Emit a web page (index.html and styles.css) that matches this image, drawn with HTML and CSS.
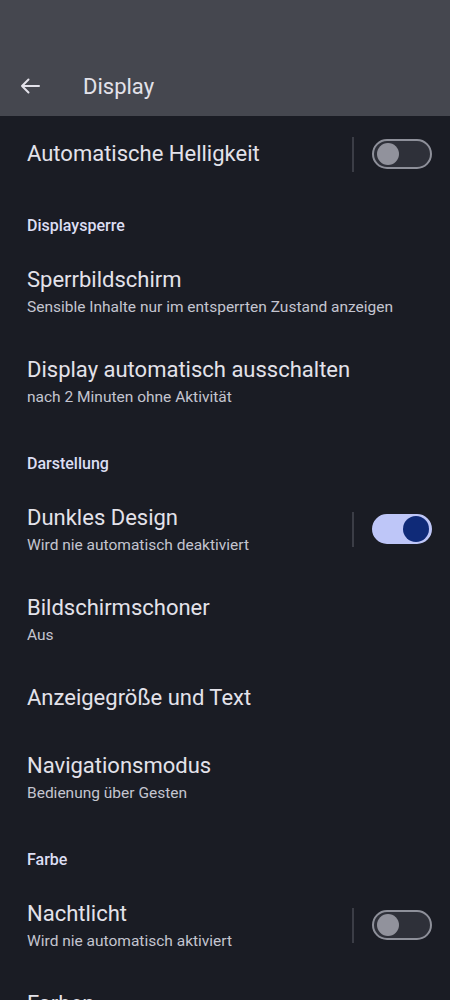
FILE: index.html
```html
<!DOCTYPE html>
<html lang="de">
  <head>
    <meta charset="UTF-8" />
    <meta name="viewport" content="width=device-width, initial-scale=1.0" />
    <title>Display</title>
    <link rel="stylesheet" href="styles.css">
  </head>
  <body>
    <header class="app-bar">
      <div class="app-bar-row">
        <svg class="back" viewBox="0 0 24 24" width="24" height="24">
          <path d="M3 12H20M9.5 5.5L3 12l6.5 6.5" fill="none" stroke="#e3e2ea" stroke-width="2" stroke-linecap="round" stroke-linejoin="round" />
        </svg>
        <h1>Display</h1>
      </div>
    </header>

    <main class="list">
      <div class="item">
        <div class="text">
          <div class="title">Automatische Helligkeit</div>
        </div>
        <div class="divider"></div>
        <div class="switch"><span class="thumb"></span></div>
      </div>

      <div class="section">Displaysperre</div>
      <div class="item two">
        <div class="text">
          <div class="title">Sperrbildschirm</div>
          <div class="summary">Sensible Inhalte nur im entsperrten Zustand anzeigen</div>
        </div>
      </div>
      <div class="item two">
        <div class="text">
          <div class="title">Display automatisch ausschalten</div>
          <div class="summary">nach 2 Minuten ohne Aktivität</div>
        </div>
      </div>

      <div class="section">Darstellung</div>
      <div class="item two">
        <div class="text">
          <div class="title">Dunkles Design</div>
          <div class="summary">Wird nie automatisch deaktiviert</div>
        </div>
        <div class="divider"></div>
        <div class="switch on"><span class="thumb"></span></div>
      </div>
      <div class="item two">
        <div class="text">
          <div class="title">Bildschirmschoner</div>
          <div class="summary">Aus</div>
        </div>
      </div>
      <div class="item">
        <div class="text">
          <div class="title">Anzeigegröße und Text</div>
        </div>
      </div>
      <div class="item two">
        <div class="text">
          <div class="title">Navigationsmodus</div>
          <div class="summary">Bedienung über Gesten</div>
        </div>
      </div>

      <div class="section">Farbe</div>
      <div class="item two">
        <div class="text">
          <div class="title">Nachtlicht</div>
          <div class="summary">Wird nie automatisch aktiviert</div>
        </div>
        <div class="divider"></div>
        <div class="switch"><span class="thumb"></span></div>
      </div>
      <div class="item">
        <div class="text">
          <div class="title">Farben</div>
        </div>
      </div>
    </main>
  </body>
</html>
```

FILE: styles.css
```css
body {
  margin: 0;
  padding: 0;
  background-color: #1a1c24;
  font-family: Roboto, "Noto Sans", sans-serif;
  color: #e3e2ea;
  overflow: hidden;
}
.app-bar {
  background-color: #45474f;
  height: 116px;
  box-sizing: border-box;
  padding-top: 66px;
}
.app-bar-row {
  display: flex;
  align-items: center;
  height: 40px;
}
.back {
  margin-left: 19px;
  flex: none;
}
.app-bar h1 {
  margin: 0 0 0 40px;
  font-size: 22px;
  font-weight: 400;
  color: #e3e2ea;
}
.list {
  padding-top: 4px;
}
.item {
  display: flex;
  align-items: center;
  padding: 0 18px 0 27px;
}
.text {
  flex: 1;
  min-width: 0;
  padding: 20px 0;
}
.item.two .text {
  padding-bottom: 18px;
}
.title {
  font-size: 22px;
  line-height: 28px;
  color: #e3e2ea;
}
.summary {
  font-size: 15.5px;
  line-height: 22px;
  margin-top: 2px;
  color: #c4c5d0;
}
.section {
  padding: 28px 27px 10px;
  font-size: 16px;
  line-height: 20px;
  font-weight: 500;
  color: #dcdef3;
}
.divider {
  width: 2px;
  height: 35px;
  background-color: #3b3d46;
  margin-right: 18px;
}
.switch {
  position: relative;
  width: 60px;
  height: 30px;
  box-sizing: border-box;
  border: 2px solid #8e909a;
  border-radius: 15px;
  background-color: #2e3039;
}
.switch .thumb {
  position: absolute;
  left: 3px;
  top: 2px;
  width: 22px;
  height: 22px;
  border-radius: 50%;
  background-color: #91929c;
}
.switch.on {
  border-color: #bec6f8;
  background-color: #bec6f8;
}
.switch.on .thumb {
  left: auto;
  right: 1px;
  top: 0;
  width: 26px;
  height: 26px;
  background-color: #0f2a78;
}
```
